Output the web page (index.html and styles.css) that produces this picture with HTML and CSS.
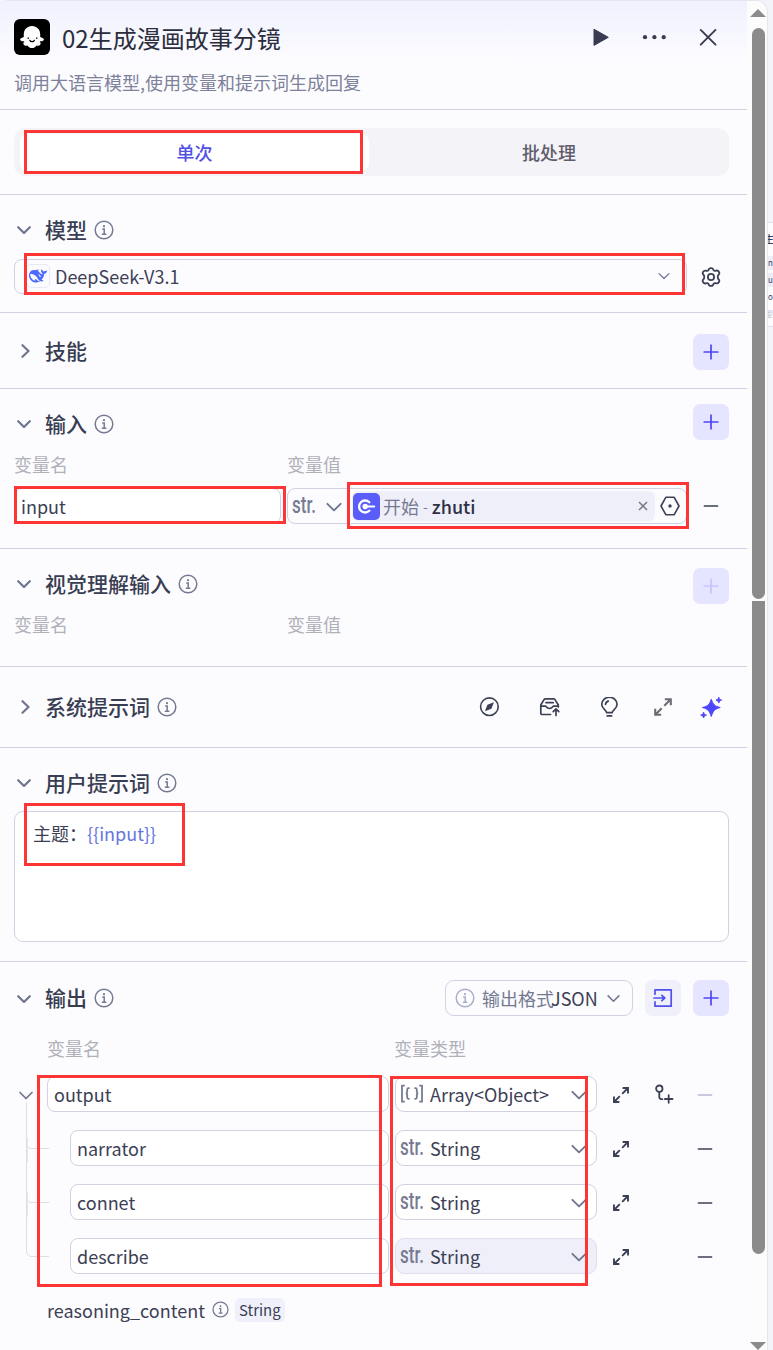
FILE: index.html
```html
<!DOCTYPE html>
<html lang="zh-CN">
<head>
    <meta charset="UTF-8">
    <meta name="viewport" content="width=device-width, initial-scale=1.0">
    <title>02生成漫画故事分镜</title>
    <link rel="stylesheet" href="styles.css">
</head>
<body>
    <!-- shared icons -->
    <svg class="sprite" width="0" height="0">
        <symbol id="down" viewBox="0 0 14 14"><path d="M1.2 4.200L7 10l5.800-5.800" fill="none" stroke="currentColor" stroke-linecap="round" stroke-linejoin="round"/></symbol>
        <symbol id="right" viewBox="0 0 14 14"><path d="M5.500 1.200l6 5.800-6 5.800" fill="none" stroke="currentColor" stroke-linecap="round" stroke-linejoin="round"/></symbol>
        <symbol id="info" viewBox="0 0 20 20">
            <circle cx="10" cy="10" r="8.8" fill="none" stroke="currentColor" stroke-width="1.5"/>
            <path d="M8.2 8.900h2v5M7.800 14.200h4.600" fill="none" stroke="currentColor" stroke-width="1.500"/>
            <circle cx="10" cy="6.200" r="1.100" fill="currentColor"/>
        </symbol>
        <symbol id="plus" viewBox="0 0 16 16"><path d="M8 1.2v13.600M1.200 8h13.600" fill="none" stroke="currentColor" stroke-width="1.700" stroke-linecap="round"/></symbol>
        <symbol id="minus" viewBox="0 0 16 16"><path d="M1.5 8h13" fill="none" stroke="currentColor" stroke-width="1.700" stroke-linecap="round"/></symbol>
        <symbol id="expand" viewBox="0 0 20 20"><path d="M11.800 2.200h6v6M17.200 2.800l-5.900 5.900M8.200 17.800h-6v-6M2.800 17.200l5.900-5.900" fill="none" stroke="currentColor" stroke-width="2.100"/></symbol>
    </svg>

    <div class="page">
        <div class="panel">
            <header class="header">
                <div class="header-top">
                    <svg class="logo" viewBox="0 0 36 36">
                        <rect width="36" height="36" rx="6" fill="#000"/>
                        <path d="M18 7c-5 0-8.200 3.600-8.200 8.300v2.600c-1.300.4-3.700 1.300-3.700 2.700 0 1.500 2.500 2 4.200 1.600-1 1.300-1.200 2.600-.5 3.600.8 1.200 2.300 1.200 3.700.6.7 1.500 2.500 2.600 4.500 2.600s3.800-1.100 4.500-2.600c1.400.6 2.900.6 3.700-.6.7-1 .5-2.300-.5-3.600 1.700.4 4.200-.1 4.200-1.600 0-1.400-2.400-2.300-3.700-2.700v-2.600C26.200 10.600 23 7 18 7z" fill="#fff"/>
                        <path d="M15.800 21.200c.6 1.900 4 1.900 4.600 0M14.200 18.800v.7M22.800 18.800v.7" fill="none" stroke="#000" stroke-width="1.200" stroke-linecap="round"/>
                    </svg>
                    <h1>02生成漫画故事分镜</h1>
                    <div class="window-actions">
                        <svg width="20" height="20" viewBox="0 0 20 20"><path d="M4 2.200v16.200L18.300 10.300z" fill="currentColor" stroke="currentColor" stroke-linejoin="round"/></svg>
                        <svg width="24" height="20" viewBox="0 0 24 20"><g fill="currentColor"><circle cx="3" cy="10.200" r="2.100"/><circle cx="12.400" cy="10.200" r="2.100"/><circle cx="21.700" cy="10.200" r="2.100"/></g></svg>
                        <svg width="20" height="20" viewBox="0 0 20 20"><path d="M2.700 2.900l14.800 14.800M17.500 2.900L2.700 17.700" fill="none" stroke="currentColor" stroke-width="1.900" stroke-linecap="round"/></svg>
                    </div>
                </div>
                <p class="desc">调用大语言模型,使用变量和提示词生成回复</p>
            </header>

            <section class="tabs-section">
                <div class="tabs">
                    <div class="tab active">单次</div>
                    <div class="tab">批处理</div>
                </div>
            </section>

            <section class="model">
                <div class="head">
                    <svg class="toggle"><use href="#down"/></svg>
                    <h2>模型</h2>
                    <svg class="info"><use href="#info"/></svg>
                </div>
                <div class="model-row">
                    <div class="model-select">
                        <span class="model-logo">
                            <svg width="18" height="18" viewBox="0 0 24 24"><path fill="#4d6bfe" d="M23.748 4.482c-.254-.124-.364.113-.512.234-.051.039-.094.09-.137.136-.372.397-.806.657-1.373.626-.829-.046-1.537.214-2.163.848-.133-.782-.575-1.248-1.247-1.548-.352-.156-.708-.311-.955-.65-.172-.241-.219-.51-.305-.774-.055-.16-.11-.323-.293-.35-.2-.031-.278.136-.356.276-.313.572-.434 1.202-.422 1.84.027 1.436.633 2.58 1.838 3.393.137.093.172.187.129.323-.082.28-.18.552-.266.833-.055.179-.137.217-.329.14a5.526 5.526 0 01-1.736-1.18c-.857-.828-1.631-1.742-2.597-2.458a11.365 11.365 0 00-.689-.471c-.985-.957.13-1.743.388-1.836.27-.098.093-.432-.779-.428-.872.004-1.67.295-2.687.684a3.055 3.055 0 01-.465.137 9.597 9.597 0 00-2.883-.102c-1.885.21-3.39 1.102-4.497 2.623C.082 8.606-.231 10.684.152 12.85c.403 2.284 1.569 4.175 3.36 5.653 1.858 1.533 3.997 2.284 6.438 2.14 1.482-.085 3.133-.284 4.994-1.86.47.234.962.327 1.78.397.63.059 1.236-.03 1.705-.128.735-.156.684-.837.419-.961-2.155-1.004-1.682-.595-2.113-.926 1.096-1.296 2.746-2.642 3.392-7.003.05-.347.007-.565 0-.845-.004-.17.035-.237.23-.256a4.173 4.173 0 001.545-.475c1.396-.763 1.96-2.015 2.093-3.517.02-.23-.004-.467-.247-.588zM11.581 18c-2.089-1.642-3.102-2.183-3.52-2.16-.392.024-.321.471-.235.763.09.288.207.486.371.739.114.167.192.416-.113.603-.673.416-1.842-.14-1.897-.167-1.361-.802-2.5-1.86-3.301-3.307-.774-1.393-1.224-2.887-1.298-4.482-.02-.386.093-.522.477-.592a4.696 4.696 0 011.529-.039c2.132.312 3.946 1.265 5.468 2.774.868.86 1.525 1.887 2.202 2.891.72 1.066 1.494 2.082 2.48 2.914.348.292.625.514.891.677-.802.09-2.14.11-3.054-.614zm1-6.44a.306.306 0 01.415-.287.302.302 0 01.2.288.306.306 0 01-.31.307.303.303 0 01-.304-.308zm3.11 1.596c-.2.081-.399.151-.59.16a1.245 1.245 0 01-.798-.254c-.274-.23-.47-.358-.552-.758a1.73 1.73 0 01.016-.588c.07-.327-.008-.537-.239-.727-.187-.156-.426-.199-.688-.199a.559.559 0 01-.254-.078c-.11-.054-.2-.19-.114-.358.028-.054.16-.186.192-.21.356-.202.767-.136 1.146.016.352.144.618.408 1.001.782.391.451.462.576.685.914.176.265.336.537.445.848.067.195-.019.354-.25.452z"/></svg>
                        </span>
                        <span class="model-name">DeepSeek-V3.1</span>
                        <svg class="arrow small"><use href="#down"/></svg>
                    </div>
                    <svg class="gear" viewBox="0 0 20 20"><g fill="none" stroke="currentColor" stroke-width="1.800" stroke-linejoin="round"><path d="M7.600 2.900Q7.900 1.100 10 1.100T12.400 2.900Q13.400 4.300 15.100 3.600Q17 3.200 18 5T17.300 8Q16.200 10 17.300 12Q18.900 13.400 18 15T15.100 16.400Q13.400 15.700 12.400 17.100Q12.100 18.900 10 18.900T7.600 17.100Q6.600 15.700 4.900 16.400Q3 16.800 2 15T2.700 12Q3.800 10 2.700 8Q1.100 6.600 2 5T4.900 3.600Q6.600 4.300 7.600 2.900z"/><circle cx="10" cy="10" r="3.100"/></g></svg>
                </div>
            </section>

            <section class="skill">
                <div class="head">
                    <svg class="toggle"><use href="#right"/></svg>
                    <h2>技能</h2>
                    <button class="add"><svg><use href="#plus"/></svg></button>
                </div>
            </section>

            <section class="inputs">
                <div class="head">
                    <svg class="toggle"><use href="#down"/></svg>
                    <h2>输入</h2>
                    <svg class="info"><use href="#info"/></svg>
                    <button class="add"><svg><use href="#plus"/></svg></button>
                </div>
                <div class="labels"><span>变量名</span><span>变量值</span></div>
                <div class="input-row">
                    <div class="field">input</div>
                    <div class="value">
                        <span class="str">str.</span>
                        <svg class="arrow"><use href="#down"/></svg>
                        <div class="ref">
                            <svg class="start" viewBox="0 0 27 27"><rect width="27" height="27" rx="5" fill="#5b5dfb"/><path d="M16.300 17.800a6 6 0 1 1 0-8.600" fill="none" stroke="#fff" stroke-width="2.300" stroke-linecap="round"/><circle cx="12.200" cy="13.500" r="2.700" fill="#fff"/><path d="M12.500 13.500h8.800" stroke="#fff" stroke-width="1.800" stroke-linecap="round"/></svg>
                            <span class="node">开始</span><span class="dash">-</span><b>zhuti</b>
                            <svg class="clear" viewBox="0 0 10 10"><path d="M1 1l8 8M9 1L1 9" stroke="currentColor" stroke-width="1.500"/></svg>
                        </div>
                        <svg class="hexagon" viewBox="0 0 20 20"><path d="M5.800 1.300h8.400L19 10l-4.800 8.700H5.800L1 10z" fill="none" stroke="currentColor" stroke-width="1.600" stroke-linejoin="round"/><circle cx="10" cy="10" r="1.700" fill="currentColor"/></svg>
                    </div>
                    <svg class="minus"><use href="#minus"/></svg>
                </div>
            </section>

            <section class="vision">
                <div class="head">
                    <svg class="toggle"><use href="#down"/></svg>
                    <h2>视觉理解输入</h2>
                    <svg class="info"><use href="#info"/></svg>
                    <button class="add disabled"><svg><use href="#plus"/></svg></button>
                </div>
                <div class="labels"><span>变量名</span><span>变量值</span></div>
            </section>

            <section class="system">
                <div class="head">
                    <svg class="toggle"><use href="#right"/></svg>
                    <h2>系统提示词</h2>
                    <svg class="info"><use href="#info"/></svg>
                    <div class="tools">
                        <svg viewBox="0 0 20 20"><circle cx="10.400" cy="9.700" r="8.800" fill="none" stroke="currentColor" stroke-width="1.600"/><path d="M14.900 5.200l-2.500 6.500-6.500 2.500 2.500-6.500z" fill="currentColor"/></svg>
                        <svg class="wide" viewBox="0 0 22 20"><g fill="none" stroke="currentColor" stroke-width="1.700" stroke-linejoin="round" stroke-linecap="round"><path d="M11.500 17.500H3c-.8 0-1.200-.4-1.200-1.200V8L5 2.600c.4-.6.8-.8 1.400-.8h8.200c.7 0 1 .2 1.400.8L19.300 8v2M1.800 9.200h4.700c.8 0 1 2.300 4 2.300s3.200-2.300 4-2.300h4.800M7 5.700h7.200"/><path d="M17 18.500v-5.500M14.200 14.700l2.800-2.800 2.800 2.800"/></g></svg>
                        <svg viewBox="0 0 20 20"><g fill="none" stroke="currentColor" stroke-width="1.700" stroke-linecap="round"><path d="M7.700 15.700c0-2.400-5-3.800-5-8.400a7.500 6.900 0 0 1 15.400 0c0 4.600-5 6-5 8.400zM6.500 7.500c.1-1.600 1.100-2.900 2.800-3.400M8.200 18.900h4.400"/></g></svg>
                        <svg class="gray"><use href="#expand"/></svg>
                        <svg class="sparkle" viewBox="0 0 22 22"><path fill="currentColor" d="M11.300 3.200c1.800 5.300 3.200 6.900 8.900 8.300-5.700 1.600-7.100 3.500-8.900 9-1.800-5.500-3.200-7.400-8.900-9 5.700-1.400 7.100-3 8.900-8.300zM18.800 1.200c.6 2 .9 2.300 2.900 2.900-2 .6-2.300.9-2.900 2.900-.6-2-.9-2.300-2.900-2.900 2-.6 2.300-.9 2.900-2.900zM3.600 16.200c.6 2 .9 2.300 2.900 2.900-2 .6-2.300.9-2.900 2.900-.6-2-.9-2.300-2.900-2.900 2-.6 2.300-.9 2.900-2.900z" stroke="currentColor" stroke-width="1" stroke-linejoin="round"/></svg>
                    </div>
                </div>
            </section>

            <section class="user">
                <div class="head">
                    <svg class="toggle"><use href="#down"/></svg>
                    <h2>用户提示词</h2>
                    <svg class="info"><use href="#info"/></svg>
                </div>
                <div class="prompt">主题：<span>{{input}}</span></div>
            </section>

            <section class="output">
                <div class="head">
                    <svg class="toggle"><use href="#down"/></svg>
                    <h2>输出</h2>
                    <svg class="info"><use href="#info"/></svg>
                    <div class="output-actions">
                        <div class="format">
                            <svg class="info"><use href="#info"/></svg>
                            <span class="format-label">输出格式</span><span class="format-value">JSON</span>
                            <svg class="arrow"><use href="#down"/></svg>
                        </div>
                        <button class="add soft"><svg class="import" viewBox="0 0 20 20"><path d="M2 6.200V1.800h16.200v16.400H2v-4.400M1 10h10M8.800 7.300l3 2.700-3 2.700" fill="none" stroke="currentColor" stroke-width="1.700" stroke-linecap="round" stroke-linejoin="round"/></svg></button>
                        <button class="add"><svg><use href="#plus"/></svg></button>
                    </div>
                </div>
                <div class="labels"><span>变量名</span><span>变量类型</span></div>
                <div class="tree">
                    <svg class="tree-lines" viewBox="0 0 37 198">
                        <path d="M6 16.500l6 6 6-6" fill="none" stroke="#70758f" stroke-width="1.700" stroke-linecap="round" stroke-linejoin="round"/>
                        <path d="M12.500 26.500V174q0 6.500 5.500 6.500h17M13.200 62v8q0 2.500 4 2.500h18M13.200 72.500v14M13.200 116v8q0 2.500 4 2.500h18M13.200 126.500v14" fill="none" stroke="#dddde4"/>
                    </svg>
                    <div class="tree-rows">
                        <div class="tree-row">
                            <div class="field">output</div>
                            <div class="type">
                                <svg class="array" viewBox="0 0 24 20"><path d="M4.800 1.600H2v16h2.800M19.200 1.600H22v16h-2.800M9.600 4.200H8.300q-1.100 0-1.100 1.200v2.800q0 1.300-1.400 1.300 1.400 0 1.400 1.300v2.800q0 1.200 1.100 1.200h1.300M14.400 4.200h1.300q1.100 0 1.100 1.200v2.800q0 1.300 1.400 1.300-1.400 0-1.400 1.300v2.800q0 1.200-1.100 1.200h-1.300" fill="none" stroke="currentColor" stroke-width="1.800"/></svg>
                                <span>Array&lt;Object&gt;</span>
                                <svg class="arrow"><use href="#down"/></svg>
                            </div>
                            <svg class="expand"><use href="#expand"/></svg>
                            <svg class="branch" viewBox="0 0 20 20"><g fill="none" stroke="currentColor" stroke-width="1.800" stroke-linecap="round"><circle cx="5.300" cy="4.700" r="3.200"/><path d="M5.300 7.900v5.200c0 1.600.5 2.100 2.100 2.100h1M14.700 11.200v7.600M10.900 15h7.600"/></g></svg>
                            <svg class="minus pale"><use href="#minus"/></svg>
                        </div>
                        <div class="tree-row child">
                            <div class="field">narrator</div>
                            <div class="type"><span class="str">str.</span><span>String</span><svg class="arrow"><use href="#down"/></svg></div>
                            <svg class="expand"><use href="#expand"/></svg>
                            <svg class="minus"><use href="#minus"/></svg>
                        </div>
                        <div class="tree-row child">
                            <div class="field">connet</div>
                            <div class="type"><span class="str">str.</span><span>String</span><svg class="arrow"><use href="#down"/></svg></div>
                            <svg class="expand"><use href="#expand"/></svg>
                            <svg class="minus"><use href="#minus"/></svg>
                        </div>
                        <div class="tree-row child">
                            <div class="field">describe</div>
                            <div class="type hovered"><span class="str">str.</span><span>String</span><svg class="arrow"><use href="#down"/></svg></div>
                            <svg class="expand"><use href="#expand"/></svg>
                            <svg class="minus"><use href="#minus"/></svg>
                        </div>
                    </div>
                </div>
                <div class="reasoning">
                    <span>reasoning_content</span>
                    <svg class="info"><use href="#info"/></svg>
                    <span class="tag">String</span>
                </div>
            </section>
        </div>

        <div class="scrollbar">
            <div class="scroll-up"></div>
            <div class="thumb thumb-top"></div>
            <div class="thumb thumb-bottom"></div>
            <div class="scroll-down"></div>
        </div>

        <!-- edge of the next node on the canvas -->
        <div class="canvas-edge">
            <div class="next-node">
                <b>生</b>
                <span class="shade">n</span>
                <span class="shade">u</span>
                <span>o</span>
                <span class="faint">型</span>
            </div>
        </div>

        <div class="mark mark-tab"></div>
        <div class="mark mark-model"></div>
        <div class="mark mark-input"></div>
        <div class="mark mark-value"></div>
        <div class="mark mark-prompt"></div>
        <div class="mark mark-names"></div>
        <div class="mark mark-types"></div>
    </div>
</body>
</html>
```
FILE: styles.css
```css
* {
    box-sizing: border-box;
}

body {
    margin: 0;
    font-family: "Noto Sans CJK SC", sans-serif;
    font-size: 18px;
    line-height: 26px;
    color: #3c4055;
    background: #f3f4fa;
}

h1, h2, p {
    margin: 0;
}

svg {
    display: block;
    flex-shrink: 0;
}

.sprite {
    position: absolute;
}

.page {
    position: relative;
    display: flex;
    width: 773px;
    height: 1350px;
    overflow: hidden;
}

.panel {
    width: 747px;
    background: #fcfcff;
    border-top: 1px solid #e6e6f2;
    border-top-left-radius: 8px;
}

/* header */
.header {
    height: 109px;
    padding: 18px 14px 0;
    border-bottom: 1px solid #ced2e3;
    background: linear-gradient(#f1f1fe, #fcfcff 64px);
    border-top-left-radius: 8px;
}

.header-top {
    display: flex;
    align-items: center;
    height: 36px;
}

.logo {
    width: 36px;
    height: 36px;
}

h1 {
    margin-left: 12px;
    font-size: 24px;
    line-height: 36px;
    font-weight: 400;
    color: #2b2d3c;
    padding-top: 2px;
}

.window-actions {
    display: flex;
    gap: 32px;
    margin-left: auto;
    padding-right: 15px;
    color: #393c50;
}

.desc {
    margin-top: 14px;
    color: #7d829a;
}

section {
    padding: 17px 18px 0 14px;
    border-bottom: 1px solid #ced2e3;
}

/* tabs */
.tabs-section {
    height: 85px;
    padding-top: 18px;
}

.tabs {
    display: grid;
    grid-template-columns: 349px 350px;
    gap: 5px;
    height: 48px;
    padding: 6px;
    border-radius: 12px;
    background: #f4f3f8;
}

.tab {
    text-align: center;
    line-height: 37px;
    font-weight: 500;
    color: #605d6b;
}

.tab.active {
    background: #fff;
    border-radius: 8px;
    color: #5150e6;
}

/* section heads */
.head {
    display: flex;
    align-items: center;
    height: 36px;
}

.toggle {
    width: 14px;
    height: 14px;
    margin: 0 14px 0 3px;
    color: #70758f;
    stroke-width: 2.2;
}

h2 {
    margin-bottom: 2px;
    font-size: 21px;
    line-height: 32px;
    font-weight: 500;
    color: #393d52;
}

.info {
    width: 20px;
    height: 20px;
    margin-left: 7px;
    color: #757a92;
}

.add {
    display: flex;
    align-items: center;
    justify-content: center;
    width: 36px;
    height: 36px;
    flex-shrink: 0;
    padding: 0;
    margin-left: auto;
    border: none;
    border-radius: 7px;
    background: #e5e5ff;
    color: #4f46fb;
}

.add svg {
    width: 16px;
    height: 16px;
}

.add.disabled {
    color: #c5c5ff;
}

.add.soft {
    background: #f0f0fb;
    color: #4f50ee;
}

.add svg.import {
    width: 20px;
    height: 20px;
}

.labels {
    display: flex;
    margin-top: 9px;
    height: 28px;
    color: #b0b1b8;
}

.labels span:first-child {
    width: 273px;
}

.arrow {
    width: 16px;
    height: 16px;
    margin-top: 1px;
    color: #70758f;
    stroke-width: 1.6;
}

/* model */
.model {
    height: 118px;
}

.model-row {
    display: flex;
    align-items: center;
    margin-top: 11px;
}

.model-select {
    display: flex;
    align-items: center;
    width: 673px;
    height: 35px;
    padding: 0 16px 0 12px;
    border: 1px solid #ced2e3;
    border-radius: 8px;
}

.model-logo {
    display: flex;
    align-items: center;
    justify-content: center;
    width: 24px;
    height: 24px;
    margin: 0 5px 1px -1px;
    border: 1px solid #e8e9f5;
    border-radius: 5px;
}

.model-name {
    margin-bottom: 2px;
}

.arrow.small {
    width: 12px;
    height: 12px;
    margin: 0 0 1px auto;
    stroke-width: 1.5;
}

.gear {
    width: 20px;
    height: 20px;
    margin-left: 14px;
}

.skill {
    height: 76px;
    padding-top: 20px;
}

.skill .add {
    margin-top: 2px;
}

/* inputs */
.inputs {
    height: 160px;
}

.inputs .add {
    margin-bottom: 4px;
}

.field {
    height: 36px;
    padding: 0 6px;
    line-height: 34px;
    border: 1px solid #ced2e3;
    border-radius: 8px;
    background: #fff;
}

.input-row {
    display: flex;
    align-items: center;
    margin-top: 9px;
}

.input-row .field {
    width: 267px;
}

.value {
    display: flex;
    align-items: center;
    width: 400px;
    height: 36px;
    margin-left: 6px;
    padding: 0 6px 0 4px;
    border: 1px solid #ced2e3;
    border-radius: 8px;
}

.str {
    width: 30px;
    font-family: Roboto, sans-serif;
    font-size: 23px;
    font-weight: 500;
    line-height: 34px;
    color: #767b93;
    transform: scaleX(.74);
    transform-origin: left;
}

.value .arrow {
    margin-left: 4px;
}

.ref {
    display: flex;
    align-items: center;
    width: 303px;
    height: 30px;
    margin-left: 10px;
    padding-left: 1px;
    border-radius: 6px;
    background: #efeff9;
}

.start {
    width: 27px;
    height: 27px;
    margin-right: 3px;
}

.node {
    color: #757a92;
}

.dash {
    margin: 0 4px;
    font-size: 14px;
    color: #757a92;
}

.ref b {
    font-weight: 500;
    color: #2e3145;
}

.clear {
    width: 10px;
    height: 10px;
    margin: 0 7px 0 auto;
    color: #757a85;
}

.hexagon {
    width: 20px;
    height: 20px;
    margin-left: 5px;
}

.minus {
    width: 16px;
    height: 16px;
}

.input-row .minus {
    margin-left: 16px;
}

.vision {
    height: 118px;
}

.vision .add {
    margin-top: 4px;
}

/* system prompt */
.system {
    height: 81px;
    padding-top: 22px;
}

.tools {
    display: flex;
    align-items: center;
    margin-left: auto;
    padding-right: 7px;
}

.tools svg {
    width: 20px;
    height: 20px;
    margin-left: 40px;
}

.tools svg.wide {
    width: 22px;
}

.tools svg.wide + svg {
    margin-left: 38px;
}

.tools svg.gray {
    margin: 0 0 1px 34px;
    color: #6b6d75;
}

.tools svg.sparkle {
    width: 22px;
    height: 22px;
    margin-left: 27px;
    color: #4f46fb;
}

/* user prompt */
.user {
    height: 214px;
}

.prompt {
    height: 131px;
    margin-top: 10px;
    padding: 8px 18px;
    border: 1px solid #ced2e3;
    border-radius: 9px;
    background: #fff;
}

.prompt span {
    color: #6577dc;
}

/* output */
.output {
    padding-top: 18px;
    border-bottom: none;
}

.output .toggle {
    margin-top: 1px;
}

.output-actions {
    display: flex;
    gap: 12px;
    margin-left: auto;
}

.format {
    display: flex;
    align-items: center;
    width: 188px;
    height: 36px;
    padding-left: 9px;
    border: 1px solid #ced2e3;
    border-radius: 9px;
}

.format .info {
    margin: 0 7px 0 0;
    color: #a9aec8;
}

.format-label {
    width: 69px;
    white-space: nowrap;
    color: #757a92;
}

.format .arrow {
    width: 13px;
    height: 13px;
    margin-left: 9px;
}

.output .labels {
    margin: 19px 0 0 33px;
}

.output .labels span:first-child {
    width: 347px;
}

.tree {
    display: flex;
    margin-top: 13px;
}

.tree-lines {
    width: 37px;
    height: 198px;
    margin-right: -4px;
}

.tree-rows {
    display: flex;
    flex-direction: column;
    gap: 18px;
}

.tree-row {
    display: flex;
    align-items: center;
    width: 666px;
}

.tree-row .field {
    width: 342px;
}

.child .field {
    width: 319px;
    margin-left: 23px;
}

.type {
    display: flex;
    align-items: center;
    width: 202px;
    height: 36px;
    margin-left: 6px;
    padding: 0 9px 0 4px;
    border: 1px solid #ced2e3;
    border-radius: 9px;
    background: #fff;
}

.type.hovered {
    background: #efeff9;
    border-color: #e0e0ee;
}

.type .arrow {
    margin-left: auto;
}

.array {
    width: 24px;
    height: 20px;
    margin-right: 6px;
    color: #767b93;
}

.expand {
    width: 18px;
    height: 18px;
    margin: 1px 0 0 15px;
}

.branch {
    width: 20px;
    height: 20px;
    margin-left: 24px;
}

.tree-row .minus {
    margin: 1px 0 0 auto;
}

.pale {
    color: #b5b9d0;
}

.reasoning {
    display: flex;
    align-items: center;
    margin: 23px 0 0 33px;
}

.reasoning .info {
    width: 17px;
    height: 17px;
    margin-bottom: 1px;
}

.tag {
    margin-left: 6px;
    padding: 0 4px;
    border-radius: 5px;
    background: #f0f0fa;
    font-size: 15px;
    line-height: 24px;
}

/* scrollbar */
.scrollbar {
    display: flex;
    flex-direction: column;
    align-items: center;
    width: 21px;
    padding: 8px 0 0 2px;
    background: #fcfcfd;
    border-top: 1px solid #e6e6f2;
    border-right: 1px solid #e4e5ef;
    border-top-right-radius: 12px;
}

.scroll-up, .scroll-down {
    border: 8px solid transparent;
}

.scroll-up {
    border-top: none;
    border-bottom-color: #8b8b8b;
}

.scroll-down {
    margin-top: 88px;
    border-bottom: none;
    border-top-color: #8b8b8b;
}

.thumb {
    width: 13px;
    background: #8b8b8b;
}

.thumb-top {
    height: 572px;
    margin-top: 11px;
    border-radius: 7px;
}

.thumb-bottom {
    height: 654px;
    margin-top: 2px;
    border-radius: 0 0 7px 7px;
}

.canvas-edge {
    width: 5px;
    padding-top: 222px;
    overflow: hidden;
}

.next-node {
    display: flex;
    flex-direction: column;
    gap: 3px;
    height: 105px;
    padding-top: 8px;
    border-top: 1px solid #e0e1ee;
    border-bottom: 1px solid #e0e1ee;
    background: #fcfcff;
    font-size: 8px;
    line-height: 14px;
}

.next-node b {
    margin-bottom: 6px;
    font-size: 10px;
    font-weight: 500;
    line-height: 16px;
    text-indent: -4px;
}

.next-node .shade {
    background: #ededf8;
}

.next-node .faint {
    color: #b8bac4;
    text-indent: -3px;
}

/* red highlight frames */
.mark {
    position: absolute;
    border: 3px solid #fd3535;
}

.mark-tab {
    left: 24px;
    top: 130px;
    width: 339px;
    height: 44px;
}

.mark-model {
    left: 24px;
    top: 253px;
    width: 661px;
    height: 42px;
}

.mark-input {
    left: 14px;
    top: 486px;
    width: 272px;
    height: 38px;
}

.mark-value {
    left: 347px;
    top: 482px;
    width: 342px;
    height: 47px;
}

.mark-prompt {
    left: 24px;
    top: 803px;
    width: 161px;
    height: 63px;
}

.mark-names {
    left: 37px;
    top: 1075px;
    width: 345px;
    height: 212px;
}

.mark-types {
    left: 390px;
    top: 1076px;
    width: 198px;
    height: 210px;
}
```
